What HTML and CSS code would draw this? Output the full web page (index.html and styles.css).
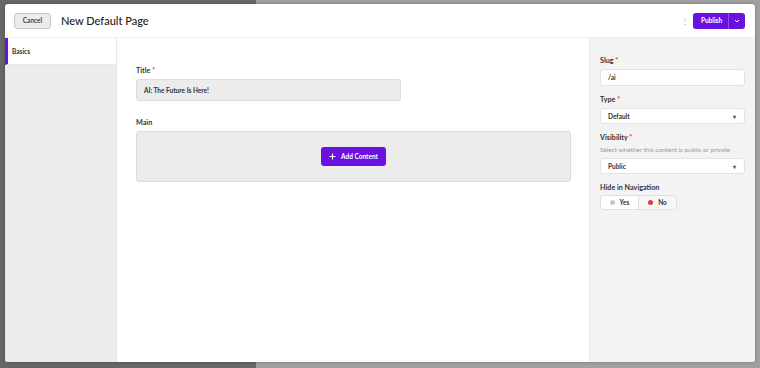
FILE: index.html
```html
<!DOCTYPE html>
<html>
<head>
  <title>New Default Page</title>
  <link rel="stylesheet" href="styles.css">
</head>
<body>
  <div class="backdrop">
    <div class="modal">
      <header class="modal-header">
        <button class="btn-cancel">Cancel</button>
        <h1>New Default Page</h1>
        <span class="kebab">&#8942;</span>
        <div class="btn-publish">
          <span class="publish-label">Publish</span>
          <span class="publish-caret">
            <svg width="6" height="4" viewBox="0 0 6 4"><path d="M1 1l2 2 2-2" fill="none" stroke="#fff" stroke-width="1"/></svg>
          </span>
        </div>
      </header>

      <div class="modal-body">
        <aside class="tabs">
          <div class="tab active">Basics</div>
        </aside>

        <main class="content">
          <div class="field">
            <label>Title <span class="req">*</span></label>
            <div class="input input-title">AI: The Future Is Here!</div>
          </div>
          <div class="field field-main">
            <label>Main</label>
            <div class="area">
              <button class="btn-add">
                <svg width="7" height="7" viewBox="0 0 7 7"><path d="M3.5 0.5v6M0.5 3.5h6" stroke="#fff" stroke-width="1.1"/></svg>
                Add Content
              </button>
            </div>
          </div>
        </main>

        <aside class="side">
          <div class="side-field">
            <label>Slug <span class="req">*</span></label>
            <div class="input side-input slug">/ai</div>
          </div>
          <div class="side-field">
            <label>Type <span class="req">*</span></label>
            <div class="input side-input select">Default <span class="arrow">&#9662;</span></div>
          </div>
          <div class="side-field">
            <label>Visibility <span class="req">*</span></label>
            <p class="help">Select whether this content is public or private</p>
            <div class="input side-input select">Public <span class="arrow">&#9662;</span></div>
          </div>
          <div class="side-field">
            <label class="label-tight">Hide in Navigation</label>
            <div class="toggle">
              <span class="opt"><i class="dot"></i>Yes</span>
              <span class="opt on"><i class="dot"></i>No</span>
            </div>
          </div>
        </aside>
      </div>
    </div>
  </div>
</body>
</html>
```

FILE: styles.css
```css
html, body {
  margin: 0;
  height: 100%;
}
body {
  font-family: Lato, "Open Sans", sans-serif;
  color: #333;
  background: linear-gradient(to right, #666 256px, #a0a0a0 256px);
}
.backdrop {
  padding: 4px 5px 6px 5px;
  height: 100%;
  box-sizing: border-box;
}
.modal {
  height: 100%;
  background: #fff;
  border-radius: 3px;
  display: flex;
  flex-direction: column;
  overflow: hidden;
  box-shadow: 0 0 3px rgba(0,0,0,0.3);
}

/* cabecera */
.modal-header {
  height: 34px;
  flex: none;
  display: flex;
  align-items: center;
  padding: 0 10px 0 9px;
  border-bottom: 1px solid #efefef;
  box-sizing: border-box;
}
.btn-cancel {
  width: 37px;
  height: 16px;
  padding: 0;
  font-family: inherit;
  font-size: 6.5px;
  font-weight: 700;
  color: #444;
  background: #ececec;
  border: 1px solid #c8c8c8;
  border-radius: 3px;
}
.modal-header h1 {
  margin: 0 0 0 10px;
  font-size: 11px;
  font-weight: 500;
  color: #222;
  flex: 1;
}
.kebab {
  font-size: 8px;
  color: #999;
  margin-right: 4px;
}
.btn-publish {
  width: 52px;
  height: 16px;
  display: flex;
  background: #6a11e0;
  border-radius: 3px;
  color: #fff;
  font-size: 6.5px;
  font-weight: 700;
}
.publish-label {
  flex: 1;
  display: flex;
  align-items: center;
  justify-content: center;
  padding-left: 2px;
}
.publish-caret {
  width: 16px;
  display: flex;
  align-items: center;
  justify-content: center;
  border-left: 1px solid rgba(255,255,255,0.25);
}

/* cuerpo */
.modal-body {
  flex: 1;
  display: grid;
  grid-template-columns: 112px 1fr 166px;
}
.tabs {
  background: #ececec;
  border-right: 1px solid #e6e6e6;
}
.tab {
  height: 27px;
  display: flex;
  align-items: center;
  padding-left: 4px;
  font-size: 6.5px;
  font-weight: 700;
  background: #fff;
  border-left: 3px solid #6a11e0;
  border-bottom: 1px solid #e6e6e6;
  box-sizing: border-box;
}
.content {
  padding: 28px 18px 0 19px;
}
label {
  display: block;
  font-size: 7.2px;
  line-height: 9px;
  font-weight: 700;
  color: #333;
  margin-bottom: 4px;
}
.label-tight {
  margin-bottom: 3px;
}
.req {
  color: #e03a3a;
}
.input {
  display: flex;
  align-items: center;
  box-sizing: border-box;
  border-radius: 3px;
  font-size: 6.5px;
  font-weight: 700;
  color: #333;
}
.input-title {
  width: 265px;
  height: 22px;
  padding-left: 7px;
  background: #ececec;
  border: 1px solid #dcdcdc;
}
.field-main {
  margin-top: 17px;
}
.area {
  width: 435px;
  height: 51px;
  background: #ececec;
  border: 1px solid #dcdcdc;
  border-radius: 3px;
  box-sizing: border-box;
  display: flex;
  align-items: center;
  justify-content: center;
}
.btn-add {
  width: 65px;
  height: 19px;
  display: flex;
  align-items: center;
  justify-content: center;
  gap: 5px;
  padding: 0;
  background: #6a11e0;
  color: #fff;
  border: none;
  border-radius: 3px;
  font-family: inherit;
  font-size: 6.5px;
  font-weight: 700;
}

/* panel derecho */
.side {
  background: #f3f3f3;
  border-left: 1px solid #e8e8e8;
  padding: 18px 10px 0 10px;
}
.side-field {
  margin-bottom: 9px;
}
.side-input {
  height: 16px;
  padding: 0 8px 0 7px;
  background: #fff;
  border: 1px solid #e2e2e2;
}
.slug {
  height: 17px;
}
.select {
  justify-content: space-between;
}
.arrow {
  font-size: 6px;
  color: #555;
}
.help {
  margin: 2px 0 4px 0;
  font-size: 6.4px;
  line-height: 8px;
  color: #999;
}
.toggle {
  display: flex;
  width: fit-content;
  background: #fff;
  border: 1px solid #e0e0e0;
  border-radius: 3px;
  height: 15px;
  box-sizing: border-box;
}
.opt {
  width: 37px;
  display: flex;
  align-items: center;
  justify-content: center;
  gap: 5px;
  font-size: 6.5px;
  font-weight: 700;
}
.opt + .opt {
  border-left: 1px solid #e0e0e0;
  background: #f7f7f7;
}
.dot {
  width: 5px;
  height: 5px;
  border-radius: 50%;
  background: #c8c8c8;
}
.opt.on .dot {
  background: #e23b3b;
}
```
